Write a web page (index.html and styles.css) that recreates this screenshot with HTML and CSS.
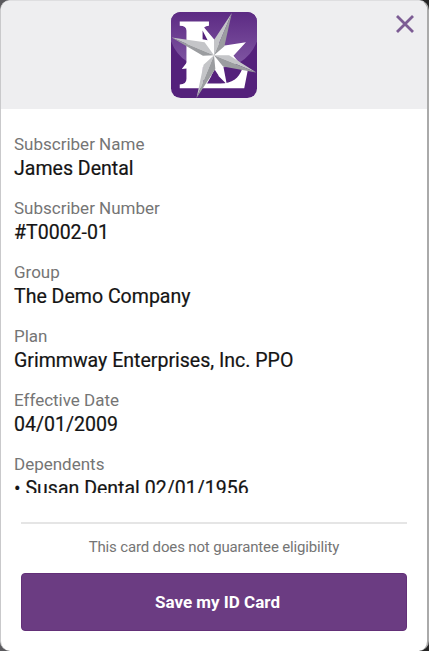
FILE: index.html
```html
<!DOCTYPE html>
<html lang="en">
<head>
<meta charset="utf-8">
<title>ID Card</title>
<link rel="stylesheet" href="styles.css">
</head>
<body>
<main class="card">
  <header class="card-header">
    <svg class="logo" viewBox="22 17 256 256" aria-hidden="true">
      <defs>
        <linearGradient id="gloss" x1="0" y1="0" x2="0" y2="1"><stop offset="0" stop-color="#5c2a83"/><stop offset="1" stop-color="#8259a5"/></linearGradient>
        <clipPath id="tile"><rect x="22" y="17" width="256" height="256" rx="29"/></clipPath>
      </defs>
      <g clip-path="url(#tile)">
        <rect x="22" y="17" width="256" height="256" fill="#54217b"/>
        <path d="M22 17H278V104Q247 184 150 184T22 104Z" fill="url(#gloss)"/>
        <path d="M48 45H135V58Q116 59 116 76V214Q116 230 132 230H169C205 230 223 215 234 187L251 188L240 244H48V233Q68 233 68 216V73Q68 58 48 58Z" fill="#fff"/>
        <path d="M108 48L152 100L170 112L182 117L245 107L208 147L225 168L178 180L188 232L150 194L128 232L116 210L115 181L54 187L84 148L116 120Z" fill="#fff"/>
        <path d="M116 72L131 101L116 98ZM152 188L164 207L142 207Z" fill="#54217b"/>
        <path d="M203 20L150 100L150 146ZM24 93L122 107L150 146ZM276 197L195 146L150 146ZM98 273L119 174L150 146Z" fill="#c4c5c8"/>
        <path d="M203 20L150 146L181 119ZM24 93L150 146L117 147ZM276 197L150 146L177 179ZM98 273L150 146L154 187Z" fill="#9b9da0"/>
      </g>
    </svg>
    <button class="close" aria-label="Close">
      <svg viewBox="0 0 20 20"><path d="M2 2L18 18M18 2L2 18"/></svg>
    </button>
  </header>
  <dl class="details">
    <div class="field"><dt>Subscriber Name</dt><dd>James Dental</dd></div>
    <div class="field"><dt>Subscriber Number</dt><dd>#T0002-01</dd></div>
    <div class="field"><dt>Group</dt><dd>The Demo Company</dd></div>
    <div class="field"><dt>Plan</dt><dd>Grimmway Enterprises, Inc. PPO</dd></div>
    <div class="field"><dt>Effective Date</dt><dd>04/01/2009</dd></div>
    <div class="field"><dt>Dependents</dt><dd>• Susan Dental 02/01/1956</dd></div>
  </dl>
  <footer class="card-footer">
    <p class="notice">This card does not guarantee eligibility</p>
    <button class="save">Save my ID Card</button>
  </footer>
</main>
</body>
</html>
```
FILE: styles.css
```css
* { box-sizing: border-box; }
body {
  margin: 0;
  height: 651px;
  overflow: hidden;
  background: linear-gradient(90deg, #5b5a5e 50%, #252525 50%);
  font-family: Roboto, sans-serif;
}
.card {
  height: 651px;
  overflow: hidden;
  border: 1px solid #c9c9cb;
  border-top-color: #dedee0;
  border-right: 2px solid #aaa;
  border-bottom: 0;
  border-radius: 10px;
  background: #fff;
}
.card-header {
  position: relative;
  height: 108px;
  padding: 11px 0 0 170px;
  background: #eeeef0;
}
.logo { display: block; width: 86px; height: 86px; }
.close {
  position: absolute;
  top: 13px;
  right: 12px;
  width: 20px;
  height: 20px;
  padding: 0;
  border: 0;
  background: none;
}
.close svg { display: block; width: 20px; height: 20px; }
.close path { fill: none; stroke: #7c5c94; stroke-width: 2.8; }
.details {
  height: 384px;
  margin: 0;
  padding: 23px 13px 0;
  overflow: hidden;
}
.field { height: 64px; }
dt { color: #757575; font-size: 17px; line-height: 24px; }
dd {
  margin: 0;
  color: #141414;
  font-size: 19.55px;
  line-height: 26px;
  white-space: nowrap;
  -webkit-text-stroke: 0.2px #141414;
}
.card-footer {
  margin: 29px 20px 0;
  border-top: 2px solid #e5e5e5;
}
.notice {
  margin: 0;
  padding-top: 13px;
  color: #757575;
  font-size: 15px;
  letter-spacing: -0.15px;
  line-height: 20px;
  text-align: center;
}
.save {
  display: block;
  width: 100%;
  height: 58px;
  margin-top: 16px;
  padding: 0 0 0 7px;
  border: 1px solid #633078;
  border-radius: 4px;
  background: #6b3c82;
  color: #fff;
  font: 700 17px Roboto, sans-serif;
}
```
